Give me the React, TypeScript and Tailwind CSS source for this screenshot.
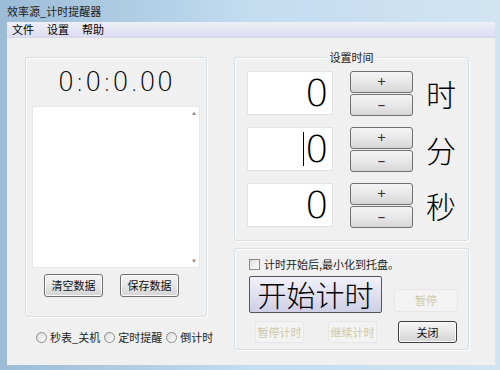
import { ReactNode } from 'react';

const cjk = "font-['Noto_Sans_CJK_SC','Microsoft_YaHei',sans-serif]";

const GroupBox = ({ className, title, children }: { className?: string; title?: string; children: ReactNode }) => (
  <div className={`relative rounded-[3px] border border-[#d5dfe5] shadow-[inset_1px_1px_0_#fff,1px_1px_0_#fff] ${className ?? ''}`}>
    {title && (
      <span className={`absolute -top-[8px] left-1/2 -translate-x-1/2 bg-[#f0f0f0] px-1 text-[11px] leading-[14px] text-[#222] ${cjk}`}>
        {title}
      </span>
    )}
    {children}
  </div>
);

const WinButton = ({ label, className, disabled, strong }: { label: string; className?: string; disabled?: boolean; strong?: boolean }) => (
  <div
    className={`flex shrink-0 items-center justify-center whitespace-nowrap rounded-[3px] text-[11px] ${cjk} ${
      disabled
        ? 'border border-[#e6e6e6] bg-[#f3f3f3] text-[#cdc8a6]'
        : `border ${strong ? 'border-[#3c3c3c]' : 'border-[#707070]'} bg-gradient-to-b from-[#f6f6f6] via-[#e6e6e6] to-[#d4d4d4] text-[#111] shadow-[inset_0_0_0_1px_#fcfcfc]`
    } ${className ?? ''}`}
  >
    {label}
  </div>
);

const Radio = ({ label }: { label: string }) => (
  <div className="flex shrink-0 items-center gap-[3px] whitespace-nowrap">
    <span className="h-[11px] w-[11px] rounded-full border border-[#8a8a8a] bg-gradient-to-br from-[#dcdcdc] to-white" />
    <span className={`text-[11px] leading-none text-[#222] ${cjk}`}>{label}</span>
  </div>
);

const SpinRow = ({ unit, caret }: { unit: string; caret?: boolean }) => (
  <div className="flex h-[46px] items-center">
    <div className="flex h-[44px] w-[86px] items-center justify-end border border-[#e4e4e4] bg-white pr-[3px]">
      {caret && <span className="mr-[1px] h-[34px] w-px bg-black" />}
      <span className="font-['DejaVu_Sans',sans-serif] text-[38px] font-extralight leading-none text-black">0</span>
    </div>
    <div className="ml-[17px] flex w-[63px] flex-col gap-[1px]">
      <div className="flex h-[22px] items-center justify-center rounded-[3px] border border-[#707070] bg-gradient-to-b from-[#f4f4f4] via-[#e8e8e8] to-[#d6d6d6] text-[15px] leading-none text-[#333]">+</div>
      <div className="flex h-[22px] items-center justify-center rounded-[3px] border border-[#707070] bg-gradient-to-b from-[#f4f4f4] via-[#e8e8e8] to-[#d6d6d6] text-[15px] leading-none text-[#333]">–</div>
    </div>
    <span className={`ml-[13px] text-[30px] font-light leading-none text-black ${cjk}`}>{unit}</span>
  </div>
);

export default function App() {
  return (
    <div className="flex h-[370px] w-[500px] flex-col overflow-hidden bg-gradient-to-r from-[#9cbcd6] via-[#c2dcf0] to-[#d2e4f2]">
      {/* title bar */}
      <div className="flex h-[22px] items-center pl-[7px]">
        <span className={`text-[11px] text-[#1a1a1a] ${cjk}`}>效率源_计时提醒器</span>
      </div>
      <div className="mx-[7px] mr-[5px] mb-[5px] flex flex-1 flex-col bg-[#f0f0f0]">
        {/* menu */}
        <div className={`flex h-[15px] items-center gap-[13px] bg-gradient-to-b from-[#eef0f8] to-[#dcdcf0] pl-[5px] text-[11px] text-black ${cjk}`}>
          <span>文件</span>
          <span>设置</span>
          <span>帮助</span>
        </div>
        <div className="flex flex-1 border-t border-[#d8d8e8] pt-[19px] pl-[18px]">
          {/* left column */}
          <div className="flex w-[182px] flex-col">
            <GroupBox className="flex h-[260px] flex-col">
              <div className="flex h-[48px] items-center justify-center font-['DejaVu_Sans',sans-serif] text-[26px] font-extralight tracking-[1px] text-black">
                0:0:0.00
              </div>
              <div className="mx-[6px] flex h-[162px] justify-end border border-[#e6e6e6] bg-white">
                <div className="flex w-[10px] flex-col items-center justify-between py-[3px] text-[6px] leading-none text-[#888]">
                  <span>▲</span>
                  <span>▼</span>
                </div>
              </div>
              <div className="mt-[6px] flex gap-[17px] pl-[18px]">
                <WinButton label="清空数据" className="h-[23px] w-[59px]" />
                <WinButton label="保存数据" className="h-[23px] w-[59px]" />
              </div>
            </GroupBox>
            <div className="mt-[15px] flex gap-[4px] pl-[11px]">
              <Radio label="秒表_关机" />
              <Radio label="定时提醒" />
              <Radio label="倒计时" />
            </div>
          </div>
          {/* right column */}
          <div className="ml-[27px] flex w-[235px] flex-col">
            <GroupBox title="设置时间" className="flex h-[184px] flex-col gap-[10px] pt-[12px] pl-[12px]">
              <SpinRow unit="时" />
              <SpinRow unit="分" caret />
              <SpinRow unit="秒" />
            </GroupBox>
            <GroupBox className="mt-[7px] flex h-[102px] flex-col pl-[14px] pt-[10px]">
              <div className="flex items-center gap-[4px]">
                <span className="h-[11px] w-[11px] border border-[#8a8a8a] bg-gradient-to-br from-[#dcdcdc] to-white" />
                <span className={`text-[11px] leading-none text-[#222] ${cjk}`}>计时开始后,最小化到托盘。</span>
              </div>
              <div className="mt-[6px] flex items-start">
                <div className={`flex h-[37px] w-[133px] items-center justify-center rounded-[2px] border border-[#555] bg-gradient-to-b from-[#f2f2fa] via-[#e0e0ee] to-[#cfcfe6] text-[29px] font-light leading-none text-black ${cjk}`}>
                  开始计时
                </div>
                <WinButton label="暂停" disabled className="ml-[12px] mt-[13px] h-[23px] w-[64px]" />
              </div>
              <div className="mt-[8px] flex items-center">
                <WinButton label="暂停计时" disabled className="ml-[6px] h-[22px] w-[49px]" />
                <WinButton label="继续计时" disabled className="ml-[24px] h-[22px] w-[49px]" />
                <WinButton label="关闭" strong className="ml-[21px] h-[22px] w-[59px]" />
              </div>
            </GroupBox>
          </div>
        </div>
      </div>
    </div>
  );
}
